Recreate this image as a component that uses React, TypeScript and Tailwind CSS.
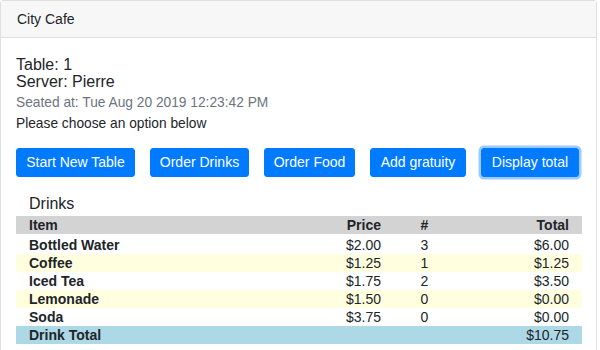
const BUTTONS = [
  { label: "Start New Table", width: "w-[119px]" },
  { label: "Order Drinks", width: "w-[99px]" },
  { label: "Order Food", width: "w-[91px]" },
  { label: "Add gratuity", width: "w-[96px]" },
  { label: "Display total", width: "w-[98px]" },
];

type Drink = { name: string; price: number; qty: number };

const DRINKS: Drink[] = [
  { name: "Bottled Water", price: 2, qty: 3 },
  { name: "Coffee", price: 1.25, qty: 1 },
  { name: "Iced Tea", price: 1.75, qty: 2 },
  { name: "Lemonade", price: 1.5, qty: 0 },
  { name: "Soda", price: 3.75, qty: 0 },
];

const money = (n: number) => `$${n.toFixed(2)}`;

export default function App() {
  const total = DRINKS.reduce((sum, d) => sum + d.price * d.qty, 0);

  return (
    <div
      className="h-[350px] w-[600px] overflow-hidden bg-white text-[#212529]"
      style={{ fontFamily: '"Liberation Sans", Arial, sans-serif' }}
    >
      <div className="w-[597px] rounded-t-[3px] border border-[#dfdfdf]">
        {/* Card header */}
        <div className="h-[37px] border-b border-[#dfdfdf] bg-[#f7f7f7] px-4 text-[14px] leading-[37px]">
          City Cafe
        </div>

        {/* Card body */}
        <div className="px-[15px] pt-[18px] pb-10">
          <div className="text-[16px] leading-[17px]">Table: 1</div>
          <div className="text-[16px] leading-[17px]">Server: Pierre</div>
          <div className="mt-[3px] text-[13.75px] leading-[20px] text-[#6c757d]">
            Seated at: Tue Aug 20 2019 12:23:42 PM
          </div>
          <div className="mt-[1px] text-[13.75px] leading-[20px]">Please choose an option below</div>

          <div className="mt-[14px] flex gap-[15px]">
            {BUTTONS.map((b) => (
              <button
                key={b.label}
                type="button"
                className={`h-[29px] whitespace-nowrap rounded-[3px] border border-[#007bff] bg-[#007bff] px-0 text-center text-[14px] text-white ${b.width} ${
                  b.label === "Display total" ? "shadow-[0_0_0_2.5px_#9ccbff]" : ""
                }`}
              >
                {b.label}
              </button>
            ))}
          </div>

          <div className="mt-[18px] pl-[13px] text-[16px] leading-[18px]">Drinks</div>

          <div className="mt-[3px] w-[566px] text-[14px] leading-[18px]">
            <div className="grid grid-cols-[282px_70px_87px_101px] border-b-2 border-white bg-[#d3d3d3] px-[13px] font-bold">
              <div>Item</div>
              <div className="text-right">Price</div>
              <div className="text-center">#</div>
              <div className="text-right">Total</div>
            </div>
            {DRINKS.map((d, i) => (
              <div
                key={d.name}
                className={`grid grid-cols-[282px_70px_87px_101px] px-[13px] ${
                  i % 2 === 1 ? "bg-[#ffffe0]" : "bg-white"
                }`}
              >
                <div className="font-bold">{d.name}</div>
                <div className="text-right">{money(d.price)}</div>
                <div className="text-center">{d.qty}</div>
                <div className="text-right">{money(d.price * d.qty)}</div>
              </div>
            ))}
            <div className="grid grid-cols-[282px_70px_87px_101px] bg-[#add8e6] px-[13px]">
              <div className="font-bold">Drink Total</div>
              <div />
              <div />
              <div className="text-right">{money(total)}</div>
            </div>
          </div>
        </div>
      </div>
    </div>
  );
}
